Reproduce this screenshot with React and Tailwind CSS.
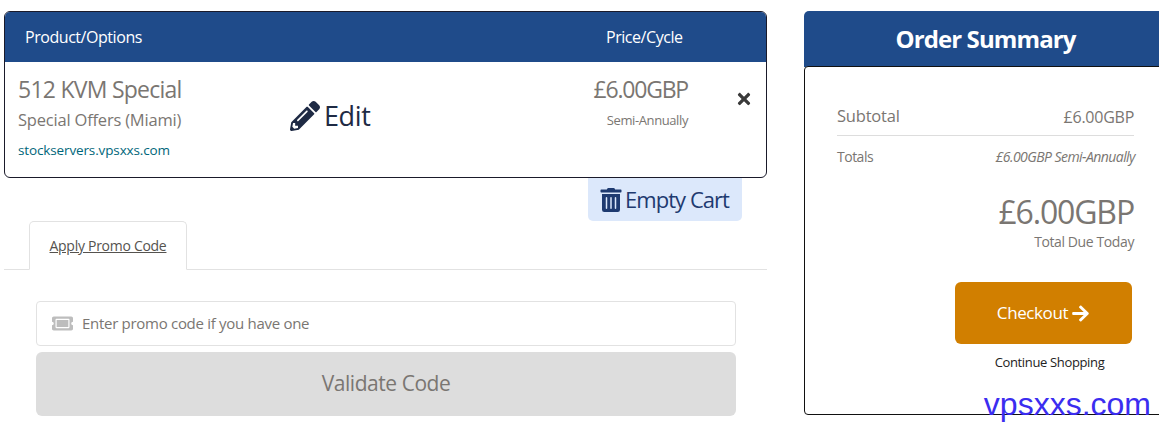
import React from 'react';
import { FaPencilAlt, FaTimes, FaTrashAlt, FaTicketAlt, FaArrowRight } from 'react-icons/fa';

const font = "font-['Open_Sans',sans-serif]";

// Cart table, empty cart button, promo code tab
const CartColumn = () => {
    return (
        <div className="w-[763px] shrink-0 ml-[4px]">
            <div className="border border-[#1a1a2a] rounded-[6px] overflow-hidden h-[167px]">
                <div className="h-[50px] bg-[#1f4b8a] flex items-center text-white text-[16px] tracking-[-0.45px] font-medium">
                    <div className="pl-[20px] w-[601px]">Product/Options</div>
                    <div>Price/Cycle</div>
                </div>
                <div className="flex relative h-[115px]">
                    <div className="w-[270px] pl-[13px] pt-[12px]">
                        <div className="text-[23px] leading-[30px] text-[#7a7672] tracking-[-0.75px]">512 KVM Special</div>
                        <div className="text-[16.5px] leading-[22px] mt-[5px] text-[#7a7672] tracking-[-0.2px]">Special Offers (Miami)</div>
                        <div className="text-[13.5px] leading-[18px] mt-[10px] text-[#00667a] tracking-[-0.13px]">stockservers.vpsxxs.com</div>
                    </div>
                    <div className="w-[295px] pt-[36px] flex items-center h-[72px] pl-[15px] gap-[4px] text-[#1e2a44]">
                        <FaPencilAlt className="text-[30px]" />
                        <span className="text-[27px] leading-[36px] tracking-[-0.4px]">Edit</span>
                    </div>
                    <div className="w-[118px] pt-[12px] text-right text-[#7a7672]">
                        <div className="text-[23px] leading-[30px] tracking-[-1.2px]">£6.00GBP</div>
                        <div className="text-[13px] leading-[18px] mt-[7px] tracking-[-0.4px]">Semi-Annually</div>
                    </div>
                    <div className="pl-[47px] pt-[28px] text-[#3a3a3a]">
                        <FaTimes className="text-[18px]" />
                    </div>
                </div>
            </div>

            <div className="flex justify-end pr-[25px]">
                <div className="w-[154px] h-[43px] bg-[#dce8fb] rounded-b-[5px] flex items-center justify-center gap-[2px] pr-[2px] text-[#1e3a70]">
                    <FaTrashAlt className="text-[24px]" />
                    <span className="text-[22px] tracking-[-0.95px]">Empty Cart</span>
                </div>
            </div>

            <div className="h-[49px] border-b border-[#e2e2e2] pl-[25px]">
                <div className="w-[158px] h-[49px] bg-white border border-[#e2e2e2] border-b-white rounded-t-[5px] flex items-center justify-center text-[14px] tracking-[-0.28px] text-[#55534f] underline">
                    Apply Promo Code
                </div>
            </div>

            <div className="pl-[32px] pr-[31px] pt-[31px]">
                <div className="h-[45px] border border-[#e2e2e2] rounded-[4px] flex items-center pl-[15px] gap-[9px] text-[15px] tracking-[-0.29px] text-[#7a7672]">
                    <FaTicketAlt className="text-[21px] text-[#bdbdbd]" />
                    <span>Enter promo code if you have one</span>
                </div>
                <div className="mt-[6px] h-[64px] bg-[#dddddd] rounded-[6px] flex items-center justify-center text-[21px] tracking-[-0.45px] text-[#7a7672]">
                    Validate Code
                </div>
            </div>
        </div>
    );
};

// Right hand order summary panel
const OrderSummary = () => {
    return (
        <div className="w-[370px] shrink-0 ml-[37px]">
            <div className="h-[56px] bg-[#1f4b8a] rounded-t-[5px] flex items-center justify-center pr-[7px] text-white text-[24px] font-bold tracking-[-0.9px]">
                Order Summary
            </div>
            <div className="h-[349px] -mt-[1px] border border-[#111] rounded-[4px] bg-white pl-[32px] pr-[39px] pt-[33px]">
                <div className="flex justify-between items-center h-[36px] border-b border-[#dddddd] pb-[2px] text-[#7a7672]">
                    <span className="text-[16.5px] tracking-[-0.2px]">Subtotal</span>
                    <span className="text-[16px] tracking-[-0.25px]">£6.00GBP</span>
                </div>
                <div className="flex justify-between items-center h-[41px] text-[#7a7672] -mr-[1px]">
                    <span className="text-[14px] tracking-[-0.5px]">Totals</span>
                    <span className="text-[14px] italic tracking-[-0.55px]">£6.00GBP Semi-Annually</span>
                </div>
                <div className="text-right text-[#7a7672] mt-[15px]">
                    <div className="text-[32px] leading-[40px] tracking-[-1.15px]">£6.00GBP</div>
                    <div className="text-[14px] leading-[20px] tracking-[-0.4px]">Total Due Today</div>
                </div>
                <div className="flex flex-col items-end mt-[30px]">
                    <div className="w-[177px] h-[62px] mr-[2px] bg-[#d17f00] rounded-[6px] flex items-center justify-center gap-[3px] text-white text-[17px] tracking-[-0.4px] font-medium">
                        <span>Checkout</span>
                        <FaArrowRight className="text-[19px]" />
                    </div>
                    <div className="w-[177px] mr-[2px] pl-[12px] text-center mt-[9px] text-[13px] leading-[18px] tracking-[-0.35px] text-[#222]">
                        Continue Shopping
                    </div>
                </div>
            </div>
        </div>
    );
};

const App = () => {
    return (
        <div className={`relative w-[1159px] h-[426px] overflow-hidden bg-white ${font}`}>
            <div className="flex pt-[11px]">
                <CartColumn />
                <OrderSummary />
            </div>
            {/* Watermark */}
            <div className="absolute right-[8px] top-[384px] text-[32px] leading-[40px] text-[#3b2df0] font-['Liberation_Sans',sans-serif]">
                vpsxxs.com
            </div>
        </div>
    );
};

export default App;
